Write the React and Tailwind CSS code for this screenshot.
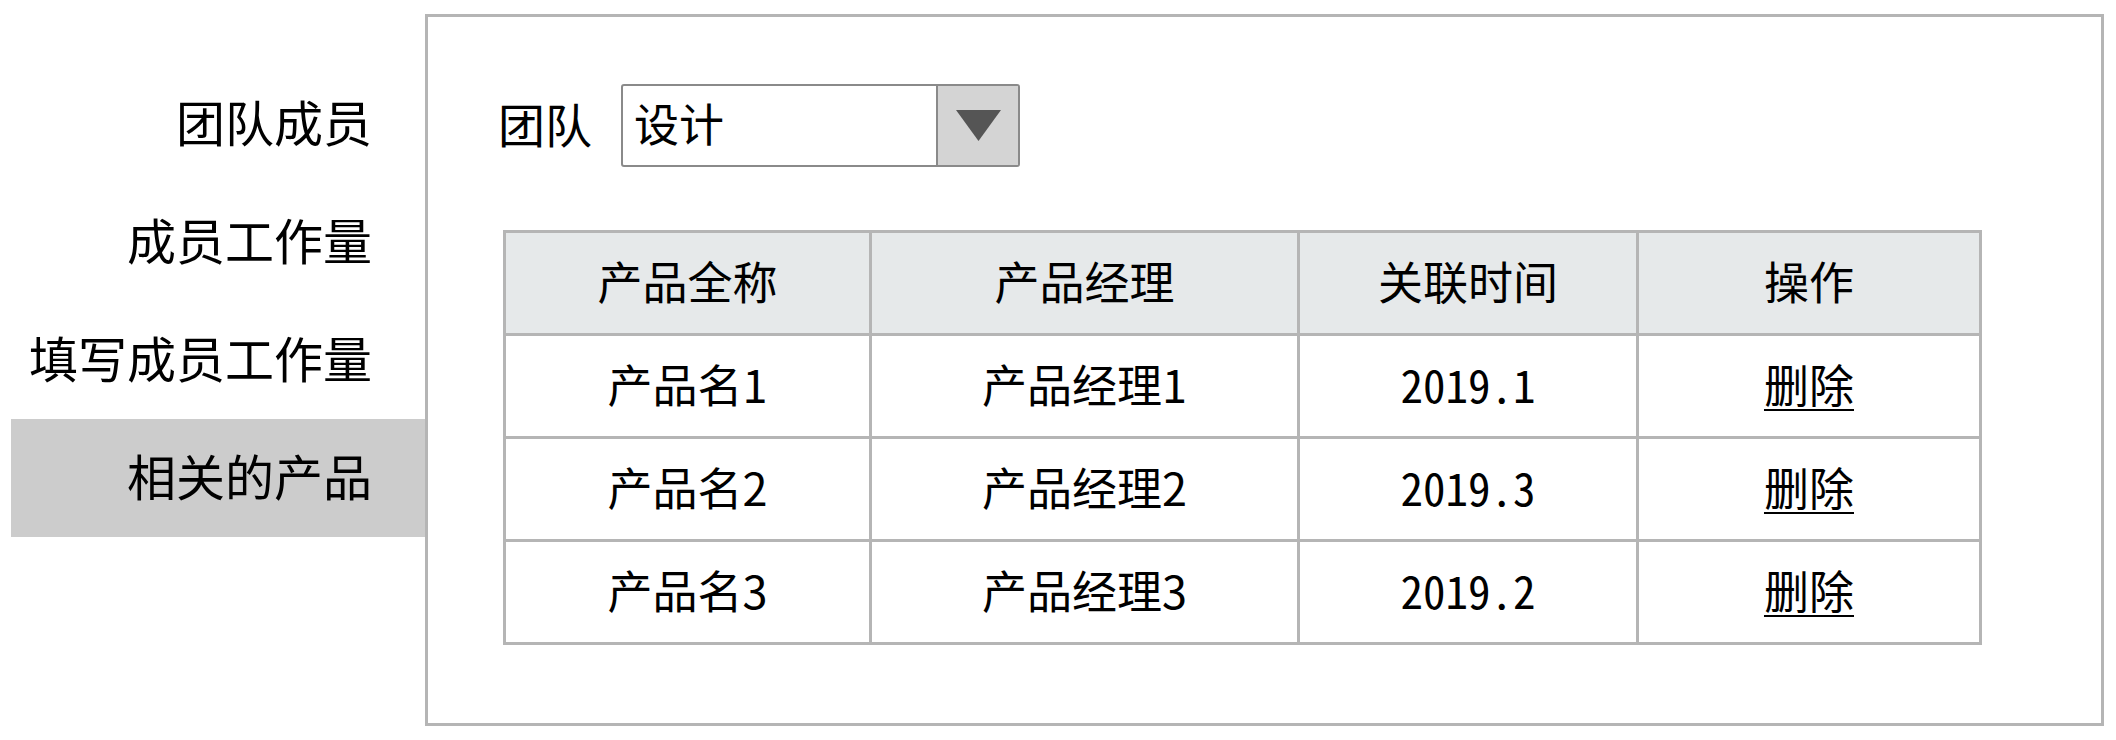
const navItems = ["团队成员", "成员工作量", "填写成员工作量", "相关的产品"];

const rows = [
  { name: "产品名1", manager: "产品经理1", time: "2019.1" },
  { name: "产品名2", manager: "产品经理2", time: "2019.3" },
  { name: "产品名3", manager: "产品经理3", time: "2019.2" },
];

const cell = "border-[3px] border-[#b5b5b5] h-[103px] p-0 pb-[6px] text-center align-middle font-normal";

const App = () => {
  return (
    <div
      className="flex h-[740px] w-[2116px] bg-white text-black"
      style={{ fontFamily: '"Noto Sans CJK SC", "Noto Sans", sans-serif' }}
    >
      <nav className="flex w-[425px] shrink-0 flex-col pl-[11px] pt-[65px]">
        {navItems.map((item, i) => (
          <div
            key={item}
            className={
              "flex h-[118px] items-center justify-end pb-[8px] pr-[53px] text-[49px] leading-none " +
              (i === 3 ? "bg-[#cccccc]" : "")
            }
          >
            {item}
          </div>
        ))}
      </nav>

      <main className="mt-[14px] h-[712px] w-[1679px] border-[3px] border-[#b5b5b5] pl-[75px] pt-[67px]">
        <div className="flex items-center">
          <span className="-ml-[5px] pb-[6px] text-[47px] leading-none">团队</span>
          <div className="ml-[29px] flex h-[83px] w-[399px] rounded-[3px] border-2 border-[#8a8a8a]">
            <div className="flex grow items-center pb-[6px] pl-[11px] text-[45px] leading-none">
              设计
            </div>
            <div className="flex w-[82px] items-center justify-center border-l-2 border-[#8a8a8a] bg-[#d4d4d4]">
              <svg width="45" height="31" viewBox="0 0 45 31">
                <polygon points="0,0 45,0 22.5,31" fill="#555555" />
              </svg>
            </div>
          </div>
        </div>

        <table className="mt-[63px] border-collapse text-[45px] leading-none">
          <thead>
            <tr className="bg-[#e6e9ea]">
              <th className={cell + " w-[366px]"}>产品全称</th>
              <th className={cell + " w-[428px]"}>产品经理</th>
              <th className={cell + " w-[339px]"}>关联时间</th>
              <th className={cell + " w-[343px]"}>操作</th>
            </tr>
          </thead>
          <tbody>
            {rows.map((row) => (
              <tr key={row.name}>
                <td className={cell}>{row.name}</td>
                <td className={cell}>{row.manager}</td>
                <td className={cell + " [font-feature-settings:'hwid']"}>{row.time}</td>
                <td className={cell}>
                  <a className="cursor-pointer underline decoration-2 underline-offset-[6px]">
                    删除
                  </a>
                </td>
              </tr>
            ))}
          </tbody>
        </table>
      </main>
    </div>
  );
};

export default App;
